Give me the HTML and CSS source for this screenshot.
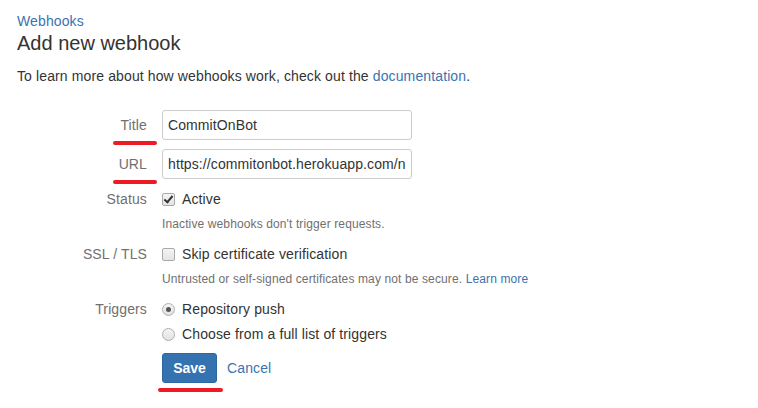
FILE: index.html
```html
<!DOCTYPE html>
<html>
<head>
<meta charset="utf-8">
<link rel="stylesheet" href="styles.css">
</head>
<body>
<div class="page">
  <a class="crumb" href="#">Webhooks</a>
  <h1 class="title">Add new webhook</h1>
  <p class="intro">To learn more about how webhooks work, check out the <a href="#">documentation</a>.</p>

  <form class="form">
    <div class="row row-input">
      <label class="label marked">Title<span class="mark mark-label"></span></label>
      <div class="field"><input class="text" type="text" value="CommitOnBot"></div>
    </div>
    <div class="row row-input">
      <label class="label marked">URL<span class="mark mark-label"></span></label>
      <div class="field"><input class="text" type="text" value="https://commitonbot.herokuapp.com/notify"></div>
    </div>
    <div class="row row-check">
      <div class="label">Status</div>
      <div class="field">
        <div class="opt"><span class="box checked"></span><span>Active</span></div>
        <div class="help">Inactive webhooks don't trigger requests.</div>
      </div>
    </div>
    <div class="row row-check">
      <div class="label">SSL / TLS</div>
      <div class="field">
        <div class="opt"><span class="box"></span><span>Skip certificate verification</span></div>
        <div class="help">Untrusted or self-signed certificates may not be secure. <a href="#">Learn more</a></div>
      </div>
    </div>
    <div class="row row-check">
      <div class="label">Triggers</div>
      <div class="field">
        <div class="opt"><span class="radio on"></span><span>Repository push</span></div>
        <div class="opt opt2"><span class="radio"></span><span>Choose from a full list of triggers</span></div>
      </div>
    </div>
    <div class="row row-buttons">
      <div class="label"></div>
      <div class="field">
        <div class="buttons">
          <button class="save" type="button">Save</button>
          <a class="cancel" href="#">Cancel</a>
        </div>
        <div class="save-mark"></div>
      </div>
    </div>
  </form>
</div>
</body>
</html>
```
FILE: styles.css
```css
html, body {
  margin: 0;
  padding: 0;
  background: #ffffff;
}
html {
  min-height: 100%;
}
body {
  font-family: "Liberation Sans", Arial, sans-serif;
  font-size: 14px;
  color: #333333;
  letter-spacing: 0.12px;
}
a {
  color: #3b73af;
  text-decoration: none;
}
.page {
  padding: 12px 0 12px 17px;
}
.crumb {
  display: block;
  font-size: 14px;
  line-height: 18px;
  color: #3b73af;
}
.title {
  margin: 0;
  font-size: 20px;
  font-weight: normal;
  line-height: 26px;
  color: #333333;
  letter-spacing: 0;
}
.intro {
  margin: 10px 0 0;
  line-height: 20px;
}
.form {
  margin-top: 24px;
  margin-left: -17px;
}
.row {
  display: grid;
  grid-template-columns: 147px 1fr;
  column-gap: 15px;
}
.label {
  position: relative;
  text-align: right;
  color: #707070;
  line-height: 20px;
}
.row-input {
  margin-bottom: 9px;
}
.row-input:nth-child(2) {
  margin-bottom: 10px;
}
.row-input .label {
  padding-top: 5px;
}
.text {
  box-sizing: border-box;
  width: 250px;
  height: 30px;
  border: 1px solid #cccccc;
  border-radius: 3px;
  padding: 4px 5px;
  font-family: "Liberation Sans", Arial, sans-serif;
  font-size: 14px;
  letter-spacing: 0.1px;
  color: #333333;
  outline: none;
}
.opt {
  display: flex;
  align-items: center;
  gap: 7px;
  height: 20px;
  line-height: 20px;
}
.opt2 {
  margin-top: 5px;
}
.help {
  font-size: 12px;
  color: #707070;
  line-height: 16px;
  margin-top: 7px;
  margin-bottom: 12px;
}
.box {
  box-sizing: border-box;
  width: 13px;
  height: 13px;
  border: 1px solid #a9a9a9;
  border-radius: 2px;
  background: linear-gradient(#f4f4f4, #e4e4e4);
  position: relative;
  flex: none;
}
.box.checked::after {
  content: "";
  position: absolute;
  left: 3px;
  top: 0px;
  width: 3px;
  height: 7px;
  border: solid #333333;
  border-width: 0 2px 2px 0;
  transform: rotate(40deg);
}
.radio {
  box-sizing: border-box;
  width: 13px;
  height: 13px;
  border: 1px solid #b0b0b0;
  border-radius: 50%;
  background: linear-gradient(#f4f4f4, #e2e2e2);
  position: relative;
  flex: none;
}
.radio.on::after {
  content: "";
  position: absolute;
  left: 3px;
  top: 3px;
  width: 5px;
  height: 5px;
  border-radius: 50%;
  background: #555555;
}
.row-buttons {
  margin-top: 9px;
}
.buttons {
  display: flex;
  align-items: center;
  gap: 10px;
}
.save {
  box-sizing: border-box;
  width: 55px;
  height: 30px;
  border: 1px solid #2d67a3;
  border-radius: 3px;
  background: #3572b0;
  color: #ffffff;
  font-family: "Liberation Sans", Arial, sans-serif;
  font-weight: bold;
  font-size: 14px;
  padding: 0;
}
.cancel {
  color: #3b73af;
}
.mark {
  position: absolute;
  display: block;
  height: 4px;
  border-radius: 2px;
  background: #ed1c24;
}
.mark-label {
  right: -10px;
  width: 44px;
  bottom: -5px;
}
.save-mark {
  width: 65px;
  height: 4px;
  margin: 5px 0 0 -4px;
  border-radius: 2px;
  background: #ed1c24;
}
```
